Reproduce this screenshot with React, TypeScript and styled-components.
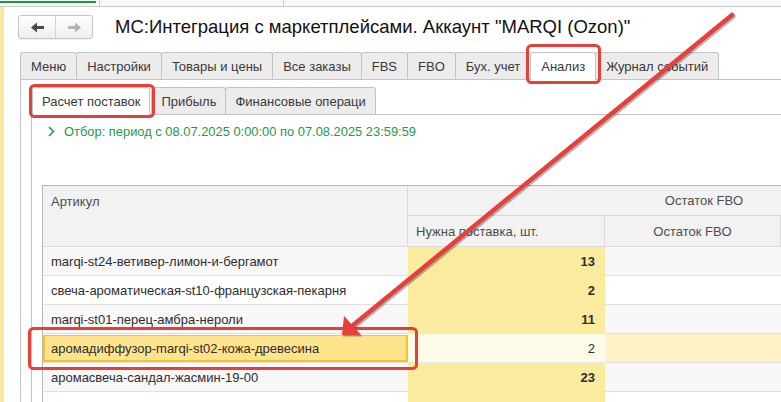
import styled, { createGlobalStyle } from 'styled-components';

const GlobalStyle = createGlobalStyle`
    html, body {
        margin: 0;
        padding: 0;
        background: #fff;
    }
    body {
        font-family: Arial, 'Liberation Sans', sans-serif;
        overflow: hidden;
    }
`;

const mainTabs = [
    'Меню',
    'Настройки',
    'Товары и цены',
    'Все заказы',
    'FBS',
    'FBO',
    'Бух. учет',
    'Анализ',
    'Журнал событий',
];

const subTabs = ['Расчет поставок', 'Прибыль', 'Финансовые операци'];

const rows = [
    { article: 'marqi-st24-ветивер-лимон-и-бергамот', need: '13' },
    { article: 'свеча-ароматическая-st10-французская-пекарня', need: '2' },
    { article: 'marqi-st01-перец-амбра-нероли', need: '11' },
    { article: 'аромадиффузор-marqi-st02-кожа-древесина', need: '2', selected: true },
    { article: 'аромасвеча-сандал-жасмин-19-00', need: '23' },
    { article: '', need: '' },
];

const RED = '#e5403a';

export default function App() {
    return (
        <>
            <GlobalStyle />
            <Page>
                <TopStrip>
                    <TopTab $w={100} $active />
                    <TopTab $w={184} />
                </TopStrip>
                <Body>
                    <SideBar />
                    <Main>
                        <Header>
                            <NavGroup>
                                <NavButton>
                                    <ArrowIcon color="#4a4a4a" />
                                </NavButton>
                                <NavButton>
                                    <ArrowIcon color="#b4b4b4" flip />
                                </NavButton>
                            </NavGroup>
                            <Title>МС:Интеграция с маркетплейсами. Аккаунт "MARQI (Ozon)"</Title>
                        </Header>

                        <Panel>
                            <TabBar>
                                {mainTabs.map((t) => (
                                    <Tab key={t} $active={t === 'Анализ'}>
                                        {t}
                                    </Tab>
                                ))}
                            </TabBar>
                            <PanelBody>
                                <SubTabBar>
                                    {subTabs.map((t, i) => (
                                        <SubTab key={t} $active={i === 0}>
                                            {t}
                                        </SubTab>
                                    ))}
                                </SubTabBar>
                                <SubBody>
                                    <Filter>
                                        <svg width="7" height="11" viewBox="0 0 7 11">
                                            <polyline
                                                points="1,1 5.5,5.5 1,10"
                                                fill="none"
                                                stroke="#1d9a4b"
                                                strokeWidth="1.6"
                                            />
                                        </svg>
                                        <span>Отбор: период с 08.07.2025 0:00:00 по 07.08.2025 23:59:59</span>
                                    </Filter>

                                    <Table>
                                        <HeadCell $row="1 / 3" $col="1" $top>
                                            Артикул
                                        </HeadCell>
                                        <HeadCell $row="1" $col="2 / 5" $center>
                                            Остаток FBO
                                        </HeadCell>
                                        <HeadCell $row="2" $col="2">
                                            Нужна поставка, шт.
                                        </HeadCell>
                                        <HeadCell $row="2" $col="3" $center>
                                            Остаток FBO
                                        </HeadCell>
                                        <HeadCell $row="2" $col="4" />

                                        {rows.map((r, i) => {
                                            const odd = i % 2 === 0;
                                            return [
                                                <ArticleCell key={`a${i}`} $odd={odd} $selected={r.selected}>
                                                    {r.article}
                                                </ArticleCell>,
                                                <NeedCell key={`n${i}`} $selected={r.selected}>
                                                    {r.need}
                                                </NeedCell>,
                                                <StockCell key={`s${i}`} $odd={odd} $selected={r.selected} />,
                                                <StockCell key={`x${i}`} $odd={odd} $selected={r.selected} />,
                                            ];
                                        })}
                                    </Table>
                                </SubBody>
                            </PanelBody>
                        </Panel>
                    </Main>
                </Body>

                <Overlay width="781" height="402" viewBox="0 0 781 402">
                    <rect x="527.5" y="45.5" width="72" height="37" rx="4" fill="none" stroke={RED} strokeWidth="3" />
                    <rect x="30.5" y="85.5" width="123" height="31" rx="4" fill="none" stroke={RED} strokeWidth="3" />
                    <rect x="29.5" y="328.5" width="387" height="40" rx="4" fill="none" stroke={RED} strokeWidth="3" />

                    <g transform="translate(1.5 1.5)" opacity="0.28">
                        <line x1="732" y1="15" x2="352" y2="326" stroke="#000" strokeWidth="4.5" strokeLinecap="round" />
                        <polygon points="342,335 344,316 361,335" fill="#000" />
                    </g>
                    <line x1="732" y1="15" x2="352" y2="326" stroke={RED} strokeWidth="4.5" strokeLinecap="round" />
                    <polygon points="342,335 344,316 361,335" fill={RED} />
                </Overlay>
            </Page>
        </>
    );
}

const ArrowIcon = ({ color, flip }: { color: string; flip?: boolean }) => (
    <svg
        width="13"
        height="11"
        viewBox="0 0 13 11"
        style={flip ? { transform: 'scaleX(-1)' } : undefined}
    >
        <path d="M0 5.5 L6 0.5 V4 H13 V7 H6 V10.5 Z" fill={color} />
    </svg>
);

const Page = styled.div`
    position: relative;
    width: 781px;
    height: 402px;
    overflow: hidden;
    display: flex;
    flex-direction: column;
    background: #fff;
    color: #333;
`;

const TopStrip = styled.div`
    flex: none;
    height: 6px;
    display: flex;
    background: #f8f8f8;
    border-bottom: 1px solid #c9c9c9;
`;

const TopTab = styled.div<{ $w: number; $active?: boolean }>`
    flex: none;
    width: ${(p) => p.$w}px;
    box-sizing: border-box;
    border-right: 1px solid #c9c9c9;
    padding-top: 1px;

    &::before {
        content: '';
        display: ${(p) => (p.$active ? 'block' : 'none')};
        height: 2px;
        margin-right: 3px;
        background: #1a9a4b;
    }
`;

const Body = styled.div`
    flex: 1;
    min-height: 0;
    display: flex;
`;

const SideBar = styled.div`
    flex: none;
    width: 4px;
    background: #fbe89f;
`;

const Main = styled.div`
    flex: 1;
    min-width: 0;
    display: flex;
    flex-direction: column;
`;

const Header = styled.div`
    flex: none;
    display: flex;
    align-items: center;
    gap: 22px;
    height: 24px;
    padding: 8px 0 0 14px;
`;

const NavGroup = styled.div`
    display: flex;
    height: 24px;
    box-sizing: border-box;
    border: 1px solid #c4c4c4;
    border-radius: 3px;
    background: linear-gradient(#ffffff, #eeeeee);
    box-shadow: 0 1px 1px rgba(0, 0, 0, 0.06);
`;

const NavButton = styled.div`
    width: 36px;
    display: flex;
    align-items: center;
    justify-content: center;

    & + & {
        border-left: 1px solid #d4d4d4;
    }
`;

const Title = styled.div`
    font-size: 18.5px;
    color: #111;
    white-space: nowrap;
`;

const Panel = styled.div`
    flex: 1;
    min-height: 0;
    display: flex;
    flex-direction: column;
    margin: 13px 0 0 16px;
`;

const TabBar = styled.div`
    flex: none;
    height: 27px;
    display: flex;
    align-items: flex-end;
`;

const Tab = styled.div<{ $active?: boolean }>`
    position: relative;
    height: ${(p) => (p.$active ? 28 : 27)}px;
    margin-bottom: ${(p) => (p.$active ? -1 : 0)}px;
    box-sizing: border-box;
    display: flex;
    align-items: center;
    padding: 0 10px ${(p) => (p.$active ? 1 : 0)}px;
    font-size: 13px;
    color: #3a3a3a;
    white-space: nowrap;
    background: ${(p) => (p.$active ? '#fff' : '#ececec')};
    border: 1px solid #c3c3c3;
    border-bottom: none;
    border-radius: 3px 3px 0 0;
    z-index: ${(p) => (p.$active ? 2 : 1)};

    & + & {
        margin-left: -1px;
    }
`;

const PanelBody = styled.div`
    flex: 1;
    min-height: 0;
    display: flex;
    flex-direction: column;
    border-top: 1px solid #c3c3c3;
    border-left: 1px solid #c3c3c3;
    padding: 7px 0 0 10px;
`;

const SubTabBar = styled.div`
    flex: none;
    height: 27px;
    display: flex;
    align-items: flex-end;
    padding-left: 1px;
`;

const SubTab = styled(Tab)`
    padding: 0 9px ${(p) => (p.$active ? 1 : 0)}px;
    margin-right: ${(p) => (p.$active ? 2 : 0)}px;
`;

const SubBody = styled.div`
    flex: 1;
    min-height: 0;
    border-top: 1px solid #c3c3c3;
    border-left: 1px solid #c3c3c3;
    padding: 8px 0 0 10px;
`;

const Filter = styled.div`
    display: flex;
    align-items: center;
    gap: 9px;
    height: 16px;
    padding-left: 6px;
    font-size: 12.9px;
    color: #1d9a4b;
    white-space: nowrap;
`;

const Table = styled.div`
    margin-top: 46px;
    width: max-content;
    display: grid;
    grid-template-columns: 365px 197px 176px 220px;
    grid-template-rows: 30px 31px repeat(6, 29px);
    border-left: 1px solid #b8b8b8;
    border-top: 1px solid #b8b8b8;
    font-size: 13px;
`;

const HeadCell = styled.div<{ $row: string; $col: string; $top?: boolean; $center?: boolean }>`
    grid-row: ${(p) => p.$row};
    grid-column: ${(p) => p.$col};
    box-sizing: border-box;
    display: flex;
    align-items: ${(p) => (p.$top ? 'flex-start' : 'center')};
    justify-content: ${(p) => (p.$center ? 'center' : 'flex-start')};
    padding: ${(p) => (p.$top ? '8px' : '0')} 8px 0;
    background: #f2f2f2;
    color: #4d4d4d;
    border-right: 1px solid #dadada;
    border-bottom: 1px solid #dadada;
    white-space: nowrap;
`;

const ArticleCell = styled.div<{ $odd?: boolean; $selected?: boolean }>`
    box-sizing: border-box;
    display: flex;
    align-items: center;
    padding: 0 8px;
    white-space: nowrap;
    color: #2e2e2e;
    background: ${(p) => (p.$selected ? '#fde38c' : p.$odd ? '#f8f8f8' : '#fff')};
    border-bottom: 1px solid #e0e0e0;
    box-shadow: ${(p) => (p.$selected ? 'inset 0 1px 0 #fff, inset 0 0 0 2px #f6c52a' : 'none')};
`;

const NeedCell = styled.div<{ $selected?: boolean }>`
    box-sizing: border-box;
    display: flex;
    align-items: center;
    justify-content: flex-end;
    padding: 0 9px;
    font-weight: ${(p) => (p.$selected ? 'normal' : 'bold')};
    color: #2e2e2e;
    background: ${(p) => (p.$selected ? '#fffbe9' : '#faeb9f')};
    border-bottom: 1px solid ${(p) => (p.$selected ? '#e8e8e8' : '#faeb9f')};
    border-right: 1px solid ${(p) => (p.$selected ? '#fff' : '#faeb9f')};
`;

const StockCell = styled.div<{ $odd?: boolean; $selected?: boolean }>`
    box-sizing: border-box;
    background: ${(p) => (p.$selected ? '#fdf3c6' : p.$odd ? '#f8f8f8' : '#fff')};
    border-bottom: 1px solid #e0e0e0;
`;

const Overlay = styled.svg`
    position: absolute;
    left: 0;
    top: 0;
    pointer-events: none;
    z-index: 10;
`;
